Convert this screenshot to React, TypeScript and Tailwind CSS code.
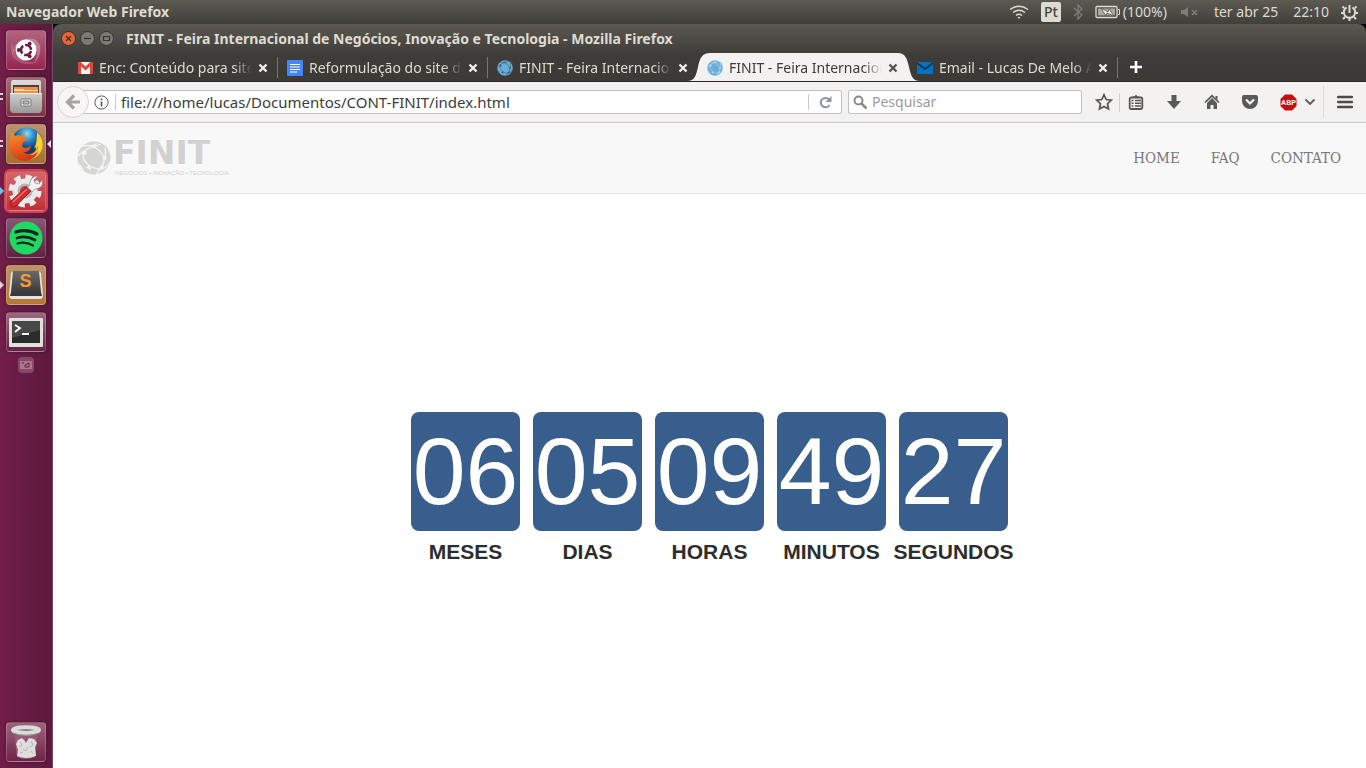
import { useId, type ReactNode } from "react";

function Globe({ size, color, line }: { size: number; color: string; line: string }) {
  return (
    <svg width={size} height={size} viewBox="0 0 34 34" aria-hidden="true" className="shrink-0">
      <circle cx="17" cy="17" r="16.500" fill={color} />
      <g fill="none" stroke={line} strokeWidth="1.300">
        <path d="M5 5C14 3 24 7 28 19" />
        <path d="M1 15C6 9 15 6 24 3" />
        <path d="M6 12C5 20 12 27 22 28C27 28 31 25 33 21" />
        <path d="M28 7C30 15 26 25 19 34" />
      </g>
      <circle cx="7.500" cy="12" r="2.200" fill={line} />
      <circle cx="27.500" cy="17" r="2" fill={line} />
      <path d="M13 5l7-3-3 5z M9 26l4-2 1 6z M22 27l5-4-1 6z" fill={line} />
      <path d="M0 23l4 1 3 6-3 0zM30 2l4 6-3 0z" fill={line} />
    </svg>
  );
}

function Tile({ label, className, left, right, children }: { label: string; className: string; left?: ReactNode; right?: boolean; children: ReactNode }) {
  return (
    <div className="relative flex w-full justify-center">
      {left && <span className="absolute left-0 top-[14px]">{left}</span>}
      <button aria-label={label} className={"flex size-10 items-center justify-center rounded border border-white/20 shadow-[0_0_3px_rgba(0,0,0,0.4)] " + className}>
        {children}
      </button>
      {right && (
        <svg className="absolute right-[1px] top-[16px]" width="4" height="8" viewBox="0 0 4 8"><path d="M4 0v8L0 4z" fill="#e8e0e4" /></svg>
      )}
    </div>
  );
}

const twoBars = <svg width="4" height="10" viewBox="0 0 4 10"><path d="M0 2h3v2H0zM0 7h3v2H0z" fill="#ddd0d8" /></svg>;
const arrow = (c: string) => <svg width="4" height="12" viewBox="0 0 4 12"><path d="M0 2l4 4-4 4z" fill={c} /></svg>;

function Launcher() {
  const id = useId();
  return (
    <aside aria-label="Lançador" className="flex w-[53px] shrink-0 flex-col border-r border-[#7a4a6e] bg-linear-to-r from-[#711e49] to-[#5c1a3c] pt-[6px] pb-[6px]">
      <nav className="flex flex-1 flex-col items-center gap-[7px]">
        <Tile label="Painel" className="bg-linear-to-b from-[#b0647f] to-[#96234f]">
          <svg width="34" height="34" viewBox="0 0 34 34">
            <path d="M4 28C1 12 12 3 25 6C34 10 33 24 25 30C31 20 28 7 14 9C5 12 3 20 4 28z" fill="#fff" opacity=".28" />
            <path d="M3 8C5 23 13 31 29 29C18 34 4 30 2 18z" fill="#fff" opacity=".16" />
            <circle cx="17" cy="17" r="10.500" fill="#fff" />
            <circle cx="17" cy="17" r="5" fill="none" stroke="#6b1d42" strokeWidth="2.600" strokeDasharray="8.500 2" strokeDashoffset="-1" />
            <g fill="#6b1d42"><circle cx="9.700" cy="17" r="1.900" /><circle cx="20.700" cy="10.700" r="1.900" /><circle cx="20.700" cy="23.300" r="1.900" /></g>
          </svg>
        </Tile>
        <Tile label="Arquivos" className="bg-linear-to-b from-[#a46e76] to-[#803043]" left={twoBars}>
          <svg width="34" height="34" viewBox="0 0 34 34">
            <defs>
              <linearGradient id={id + "f"} x2="0" y2="1"><stop stopColor="#ddd" /><stop offset="1" stopColor="#999" /></linearGradient>
              <linearGradient id={id + "g"} x2="0" y2="1"><stop stopColor="#cfcfcf" /><stop offset="1" stopColor="#9c9c9c" /></linearGradient>
            </defs>
            <path d="M4 0h26q2 0 2 3v28q0 2-2 2H4q-2 0-2-2V3q0-3 2-3z" fill={`url(#${id}f)`} />
            <path d="M4 5h26v8H4z" fill="#4b4038" /><path d="M5 7h24v6H5z" fill="#ee9145" /><path d="M5 9h9l2 1h13v1H5z" fill="#ffd6a5" />
            <path d="M1 13h32v17q0 2-2 2H3q-2 0-2-2z" fill={`url(#${id}g)`} /><path d="M1 13h32v1H1z" fill="#f5f5f5" />
            <rect x="12" y="19" width="10" height="7" rx="1" fill="#eee" stroke="#777" /><path d="M14 21h6v3h-6z" fill="#bbb" stroke="#777" />
          </svg>
        </Tile>
        <Tile label="Firefox" className="bg-linear-to-b from-[#bd9170] to-[#a66e31]" left={twoBars} right>
          <svg width="36" height="36" viewBox="0 0 36 36">
            <defs>
              <radialGradient id={id + "b"} cx=".5" cy=".2"><stop stopColor="#8ed9f5" /><stop offset=".5" stopColor="#2684c2" /><stop offset="1" stopColor="#123a74" /></radialGradient>
              <linearGradient id={id + "o"} x2=".3" y2="1"><stop stopColor="#f49926" /><stop offset=".5" stopColor="#ee661f" /><stop offset="1" stopColor="#d33c18" /></linearGradient>
            </defs>
            <circle cx="19" cy="17" r="15.500" fill={`url(#${id}b)`} />
            <path d="M29 6c5 4 7 11 5 17s-8 11-15 11c6-3 9-8 9-13l-2 2c3-6 3-12 3-17z" fill="#fbd02b" />
            <path d="M4 6l3 4c2-1 4-1 6 0l4-4-1 5c2 1 3 2 4 3l-5 2-1 4c2 3 6 2 9 0-1 6-6 7-8 6 5 4 12 2 15-6 2 8-5 15-13 15C8 35 1 28 1 19c0-4 1-6 2-8z" fill={`url(#${id}o)`} />
            <path d="M31 12c2 7-2 15-9 17 7 0 12-7 9-17z" fill="#ffe66c" />
          </svg>
        </Tile>
        <Tile label="Configurações" className="bg-linear-to-b from-[#d4666c] to-[#be2f37] outline-2 outline-[#d9424b]" left={arrow("#6fbfe9")}>
          <svg width="36" height="36" viewBox="0 0 36 36">
            <circle cx="17" cy="18" r="14" fill="none" stroke="#ebebeb" strokeWidth="5" strokeDasharray="6.200 4.796" />
            <circle cx="17" cy="18" r="12.500" fill="#e9e9e9" />
            <circle cx="17" cy="18" r="7.500" fill="#b5b5b5" />
            <circle cx="17" cy="18" r="5" fill="#c53f46" />
            <path d="M19 15l3-3c-1-5 3-9 8-9l-4 4 1 3 4 1 3-4c2 5-2 9-7 9l-3 3z" fill="#f2f2f2" stroke="#888" strokeWidth=".7" />
            <path d="M18 14l5 4L8 33q-3 3-5 0t0-5z" fill="#d12c31" stroke="#94171b" strokeWidth=".8" /><path d="M5 29L19 16" stroke="#ef7777" strokeWidth="1.200" />
          </svg>
        </Tile>
        <Tile label="Spotify" className="bg-linear-to-b from-[#8b5673] to-[#602042]">
          <svg width="34" height="34" viewBox="0 0 34 34"><circle cx="17" cy="17" r="16.500" fill="#1fd963" /><g fill="none" stroke="#17251c" strokeLinecap="round"><path d="M7 11Q18 7.500 28 13" strokeWidth="3.200" /><path d="M8 17Q17 14 26 19" strokeWidth="2.800" /><path d="M8.500 22.500Q16 20 24 24.500" strokeWidth="2.300" /></g></svg>
        </Tile>
        <Tile label="Sublime Text" className="bg-linear-to-b from-[#c09269] to-[#b5782e]" left={arrow("#ddd0d8")}>
          <svg width="36" height="36" viewBox="0 0 36 36">
            <defs><linearGradient id={id + "s"} x2="0" y2="1"><stop stopColor="#6a6a6a" /><stop offset="1" stopColor="#3c3c3c" /></linearGradient></defs>
            <path d="M5 4h26l2 2 2 22q0 4-3 4H4q-3 0-3-4L3 6z" fill="#e4e4e4" /><path d="M5 4h26l2 21H3z" fill={`url(#${id}s)`} /><path d="M3 25h30l1 4H2z" fill="#3a3a3a" />
            <text x="17.500" y="20" textAnchor="middle" fontFamily="Liberation Sans, sans-serif" fontWeight="700" fontSize="18" fill="#f89a35">S</text>
          </svg>
        </Tile>
        <Tile label="Terminal" className="bg-linear-to-b from-[#9b6782] to-[#632246]">
          <svg width="36" height="32" viewBox="0 0 36 32"><rect x="1" y="2" width="34" height="29" rx="1" fill="#e1e1dc" /><path d="M4 5h28v22H4z" fill="#2c2c2c" /><path d="M4 5h28v9L4 22z" fill="#484848" /><path d="M7 9l5 3-5 4M14 18h7" stroke="#fff" strokeWidth="1.800" fill="none" /></svg>
        </Tile>
        <button aria-label="Dispositivo" className="-mt-[2px] flex h-4 w-4 items-center justify-center rounded-sm bg-[#87486a]">
          <svg width="12" height="10" viewBox="0 0 12 10"><path d="M0 1h12v8H0z" fill="#a87790" /><path d="M2 3h2M5 5l4-2v4H5z" stroke="#63203f" fill="none" /></svg>
        </button>
      </nav>
      <Tile label="Lixeira" className="bg-linear-to-b from-[#9d6380] to-[#702248]">
        <svg width="32" height="36" viewBox="0 0 32 36">
          <path d="M4 7h24l-3 26q-9 4-18 0z" fill="#975977" />
          <path d="M6 20l2-4 4-2 3 3 1 2 3-5 5 1 3 4-2 4 1 9q-10 4-19 0l1-6z" fill="#dedede" />
          <path d="M10 18l2 3-3 2M13 25l3 2 2-4M21 17l2 4-3 2M10 29l3-1M21 27l2 3" stroke="#b5b5b5" fill="none" />
          <ellipse cx="16" cy="6" rx="13" ry="2.800" fill="#7d5a68" stroke="#d8ddd9" strokeWidth="4" />
          <path d="M3 9q13 5 26 0" stroke="#8f9690" fill="none" />
        </svg>
      </Tile>
    </aside>
  );
}

function Close({ dark }: { dark?: boolean }) {
  return (
    <button aria-label="Fechar aba" className="flex size-3 shrink-0 items-center justify-center">
      <svg width="10" height="10" viewBox="0 0 10 10"><path d="M1.500 1.500l7 7M8.500 1.500l-7 7" stroke={dark ? "#55544f" : "#eeeeec"} strokeWidth="2.400" /></svg>
    </button>
  );
}

function Tab({ title, icon, active, bare }: { title: string; icon: ReactNode; active?: boolean; bare?: boolean }) {
  return (
    <div className={"relative flex w-[210px] items-center pt-[2px] pl-[9px] " + (active ? "z-10" : "")}>
      {active && (
        <svg className="absolute -left-[11px] bottom-0" width="233" height="28" viewBox="0 0 233 28">
          <path d="M0 28C8 28 9 22 11 14C13 5 15 0 23 0H211C218 0 220 5 222 14C224 22 225 28 233 28z" fill="#f3f2f1" />
        </svg>
      )}
      <button role="tab" aria-selected={!!active} className={"relative flex items-center gap-[6px] text-left " + (active ? "text-[#3c3b37]" : "text-[#dfdbd2]")}>
        <span className="flex w-4 justify-center">{icon}</span>
        <span className="w-[153px] overflow-hidden whitespace-nowrap [mask-image:linear-gradient(to_right,#000_88%,transparent)]">{title}</span>
      </button>
      <span className="relative ml-[5px] flex"><Close dark={active} /></span>
      {!bare && <span className="absolute right-0 top-1 h-[21px] w-px bg-[#77756f]" />}
    </div>
  );
}

function WindowDot({ label, className, d }: { label: string; className: string; d: string }) {
  return (
    <button aria-label={label} className={"flex size-[15px] items-center justify-center rounded-full border border-[#33322e] " + className}>
      <svg width="9" height="9" viewBox="0 0 9 9"><path d={d} fill="none" stroke="#33322e" strokeWidth="1.200" /></svg>
    </button>
  );
}

const units = [
  ["06", "MESES"],
  ["05", "DIAS"],
  ["09", "HORAS"],
  ["49", "MINUTOS"],
  ["27", "SEGUNDOS"],
];

const toolButton = "flex w-[38px] items-center justify-center";

export default function App() {
  const favicon = <Globe size={16} color="#68aedb" line="#b9d9ea" />;
  const darkFavicon = <Globe size={16} color="#68aedb" line="#3f5d6d" />;
  return (
    <div className="flex min-h-screen flex-col bg-white font-['Noto_Sans',sans-serif] text-[14px] leading-5">
      <header className="flex h-6 items-center bg-linear-to-b from-[#5c5a51] to-[#403f3a] pl-[6px] pr-2 text-[#dfdbd2]">
        <span className="flex-1 font-bold">Navegador Web Firefox</span>
        <svg width="20" height="16" viewBox="0 0 20 16" fill="none" stroke="#dfdbd2" strokeWidth="1.500"><path d="M1 5.500Q10-1 19 5.500M4 8.500Q10 4 16 8.500M7 11.500Q10 9 13 11.500" /><path d="M8.500 13h3L10 15z" fill="#dfdbd2" stroke="none" /></svg>
        <span className="ml-3 flex h-5 w-5 items-center justify-center rounded-xs bg-[#dfdbd2] font-medium text-[#45443f]">Pt</span>
        <svg className="ml-3" width="10" height="16" viewBox="0 0 10 16"><path d="M1 4l8 7-4 4V1l4 4-8 7" fill="none" stroke="#807e76" strokeWidth="1.200" /></svg>
        <svg className="ml-3" width="26" height="14" viewBox="0 0 26 14"><rect x="1" y="1.500" width="21" height="11" rx="1" fill="none" stroke="#dfdbd2" strokeWidth="1.300" /><path d="M3 3.500h17v7H3z" fill="#aaa79f" /><path d="M23 4.500h1.500v5H23" stroke="#dfdbd2" fill="none" /><path d="M6 3l7 4 1-3 5 7-7-3-1 3z" fill="#f3f0e9" stroke="#45443f" strokeWidth=".7" /></svg>
        <span className="ml-[2px]">(100%)</span>
        <svg className="ml-[13px]" width="19" height="12" viewBox="0 0 19 12"><path d="M1 4h3l4-3v10L4 8H1z" fill="#807e76" /><path d="M12 4l5 5M17 4l-5 5" stroke="#807e76" strokeWidth="1.500" /></svg>
        <span className="ml-[15px]">ter abr 25</span>
        <span className="ml-[15px]">22:10</span>
        <svg className="ml-3" width="17" height="17" viewBox="0 0 17 17" fill="none" stroke="#dfdbd2"><path d="M5.500 3.300a5.700 5.700 0 1 0 6 0" strokeWidth="2" /><path d="M8.500 1v8" strokeWidth="2" /><path d="M3 4L1.500 2.500M14 4l1.500-1.500M2.500 9H0M14.500 9H17M4 13l-2 2M13 13l2 2M8.500 14v3" strokeWidth="2" /></svg>
      </header>

      <div className="flex flex-1">
        <Launcher />
        <div className="flex min-w-0 flex-1 flex-col">
          <div className="bg-black">
            <div className="rounded-t-lg bg-linear-to-b from-[#5a5850] via-[#3d3c38] via-55% to-[#3b3a36]">
              <div className="flex h-[29px] items-center gap-[4px] pl-2 text-[#dfdbd2]">
                <WindowDot label="Fechar" className="bg-[#ee6438]" d="M2 2l5 5M7 2l-5 5" />
                <WindowDot label="Minimizar" className="bg-[#7c7a72]" d="M1 4.500h7" />
                <WindowDot label="Maximizar" className="bg-[#7c7a72]" d="M1.500 2.500h6v4h-6z" />
                <h1 className="ml-[8px] truncate font-bold">FINIT - Feira Internacional de Negócios, Inovação e Tecnologia - Mozilla Firefox</h1>
              </div>
              <div role="tablist" className="flex h-[29px] border-b border-[#2b2a27] pl-[15px]">
                <Tab title="Enc: Conteúdo para site" icon={<svg width="15" height="12" viewBox="0 0 15 12"><path d="M0 0h15v12H0z" fill="#f4f1ef" /><path d="M1.500 12V1l6 5.500L13.500 1v11" fill="none" stroke="#d8473b" strokeWidth="3" /></svg>} />
                <Tab title="Reformulação do site da" icon={<svg width="16" height="16" viewBox="0 0 16 16"><rect width="16" height="16" rx="1" fill="#4386f5" /><path d="M3 4.500h10M3 7h10M3 9.500h10M3 12h7" stroke="#fff" strokeWidth="1.200" /></svg>} />
                <Tab title="FINIT - Feira Internacional" icon={darkFavicon} bare />
                <Tab title="FINIT - Feira Internacional" icon={favicon} active bare />
                <Tab title="Email - Lucas De Melo Alves" icon={<svg width="16" height="12" viewBox="0 0 16 12"><path d="M0 0h16v12H0z" fill="#0072c6" /><path d="M0 1l8 6 8-6" fill="none" stroke="#262d33" strokeWidth="1.600" /></svg>} />
                <button aria-label="Nova aba" className="ml-[10px]"><svg width="16" height="16" viewBox="0 0 16 16"><path d="M8 2v12M2 8h12" stroke="#fff" strokeWidth="2.600" /></svg></button>
              </div>
            </div>
          </div>

          <div className="flex h-[41px] items-center border-b border-[#c8c6c4] bg-[#f3f2f1] pl-1 text-[15px]">
            <button aria-label="Voltar" className="z-10 flex size-8 shrink-0 items-center justify-center rounded-full border border-[#d8d6d4] bg-[#f7f6f5]">
              <svg width="16" height="16" viewBox="0 0 16 16" fill="none" stroke="#a5a4a2" strokeWidth="3.200"><path d="M9 1.500L2.500 8 9 14.500M3 8h12" /></svg>
            </button>
            <div className="-ml-2 flex h-6 min-w-0 flex-1 items-center rounded-r-xs border border-[#c3c1bf] bg-white pl-3">
              <svg width="15" height="15" viewBox="0 0 15 15"><circle cx="7.500" cy="7.500" r="6.600" fill="none" stroke="#5b5b5b" /><path d="M7.500 6.500v5M7.500 3.500v1.700" stroke="#5b5b5b" strokeWidth="1.700" /></svg>
              <span className="ml-[6px] h-4 w-px bg-[#c9c9c9]" />
              <input aria-label="Endereço" defaultValue="file:///home/lucas/Documentos/CONT-FINIT/index.html" className="ml-[5px] min-w-0 flex-1 bg-transparent text-[#3c3c3c] outline-none" />
              <span className="h-4 w-px bg-[#c9c9c9]" />
              <button aria-label="Recarregar" className="flex w-8 justify-center"><svg width="13" height="13" viewBox="0 0 13 13"><path d="M10.500 9A4.700 4.700 0 1 1 10 3.500" fill="none" stroke="#8796a3" strokeWidth="2" /><path d="M12.500 0v6h-6z" fill="#8796a3" /></svg></button>
            </div>
            <label className="ml-[6px] flex h-6 w-[234px] items-center rounded-xs border border-[#c3c1bf] bg-white pl-1">
              <svg width="15" height="15" viewBox="0 0 15 15" fill="none" stroke="#8b8b8b"><circle cx="5.500" cy="5.500" r="4" strokeWidth="2" /><path d="M8.500 8.500l5 5" strokeWidth="2.500" /></svg>
              <input aria-label="Pesquisar" placeholder="Pesquisar" className="ml-1 min-w-0 flex-1 bg-transparent text-[14px] outline-none placeholder:text-[#9a9a9a]" />
            </label>
            <button aria-label="Favoritar" className="ml-[10px] flex w-6 justify-center"><svg width="18" height="18" viewBox="0 0 18 18"><path d="M9 1.800l2.200 4.700 5 .700-3.700 3.500 1 5.200L9 13.400l-4.500 2.500 1-5.200L1.800 7.200l5-.700z" fill="none" stroke="#555" strokeWidth="1.700" /></svg></button>
            <span className="ml-[3px] h-[19px] w-px bg-[#d2d0ce]" />
            <button aria-label="Lista de favoritos" className="flex w-[32px] justify-center"><svg width="16" height="16" viewBox="0 0 16 16"><rect x="1.700" y="3.500" width="12.600" height="11.500" rx="1.500" fill="none" stroke="#555" strokeWidth="1.800" /><path d="M5 4V2.500h1.500L8 .500l1.500 2H11V4z" fill="#555" /><path d="M3.500 6.500h2M7 6.500h6M3.500 9.200h2M7 9.200h6M3.500 12h2M7 12h6" stroke="#555" strokeWidth="1.500" /></svg></button>
            <div className="ml-[3px] flex">
              <button aria-label="Downloads" className={toolButton}><svg width="16" height="16" viewBox="0 0 16 16"><path d="M5.500 1h5v6H15l-7 8-7-8h4.500z" fill="#5a5a5a" /></svg></button>
              <button aria-label="Início" className={toolButton}><svg width="16" height="16" viewBox="0 0 16 16"><path d="M1 8.500L8 1.800l7 6.700" fill="none" stroke="#5a5a5a" strokeWidth="1.700" /><path d="M3 9l5-5 5 5v6H9.500v-4h-3v4H3zM11.500 2h2v4l-2-2z" fill="#5a5a5a" /></svg></button>
              <button aria-label="Pocket" className={toolButton}><svg width="16" height="16" viewBox="0 0 16 16"><path d="M2 1h12q2 0 2 2v4a8 8 0 0 1-16 0V3q0-2 2-2z" fill="#5a5a5a" /><path d="M4 5.500l4 4 4-4" fill="none" stroke="#f7f6f5" strokeWidth="2.200" /></svg></button>
              <button aria-label="Adblock Plus" className={toolButton}><svg width="17" height="17" viewBox="0 0 17 17"><path d="M5 .500h7l4.500 4.500v7L12 16.500H5L.500 12V5z" fill="#c70d0d" /><text x="8.500" y="11.200" textAnchor="middle" fontFamily="Liberation Sans, sans-serif" fontWeight="700" fontSize="7" fill="#fff">ABP</text></svg></button>
            </div>
            <button aria-label="Mais ferramentas" className="-ml-[3px] mr-[7px]"><svg width="12" height="10" viewBox="0 0 12 10"><path d="M1.500 2.500L6 7l4.500-4.500" fill="none" stroke="#5a5a5a" strokeWidth="1.800" /></svg></button>
            <span className="h-8 w-px bg-[#dddbd9]" />
            <button aria-label="Abrir menu" className="flex w-[42px] justify-center"><svg width="16" height="14" viewBox="0 0 16 14"><path d="M1 2h14M1 7h14M1 12h14" stroke="#4c4c4c" strokeWidth="2.400" strokeLinecap="round" /></svg></button>
          </div>

          <div className="flex h-[71px] items-center justify-between border-b border-[#e5e5e5] bg-[#f8f8f8] pl-6 pr-[25px]">
            <a href="#inicio" aria-label="FINIT" className="flex items-center gap-1 text-[#d3d3d3]">
              <Globe size={34} color="#d6d6d4" line="#f4f4f4" />
              <svg width="114" height="36" viewBox="0 0 114 36" fill="#d1d1d1">
                <text x="-2" y="24" fontFamily="DejaVu Sans, sans-serif" fontWeight="700" fontSize="33">FINIT</text>
                <text x="0" y="35" fontFamily="Liberation Sans, sans-serif" fontSize="6">NEGÓCIOS • INOVAÇÃO • TECNOLOGIA</text>
              </svg>
            </a>
            <nav className="flex gap-[31px] font-['DejaVu_Serif_Condensed','DejaVu_Serif',serif] text-[15px] text-[#777]">
              <a href="#home">HOME</a>
              <a href="#faq">FAQ</a>
              <a href="#contato">CONTATO</a>
            </nav>
          </div>

          <main className="flex flex-1 justify-center gap-[13px] pt-[218px] font-['Liberation_Sans',sans-serif]">
            {units.map(([value, label]) => (
              <div key={label} className="flex w-[109px] flex-col items-center gap-[9px]">
                <div className="flex h-[119px] w-full items-center justify-center rounded-lg bg-[#385e8d] text-[95px] leading-none text-white">{value}</div>
                <div className="whitespace-nowrap text-[21px] font-bold leading-6 text-[#2d2d2d]">{label}</div>
              </div>
            ))}
          </main>
        </div>
      </div>
    </div>
  );
}
